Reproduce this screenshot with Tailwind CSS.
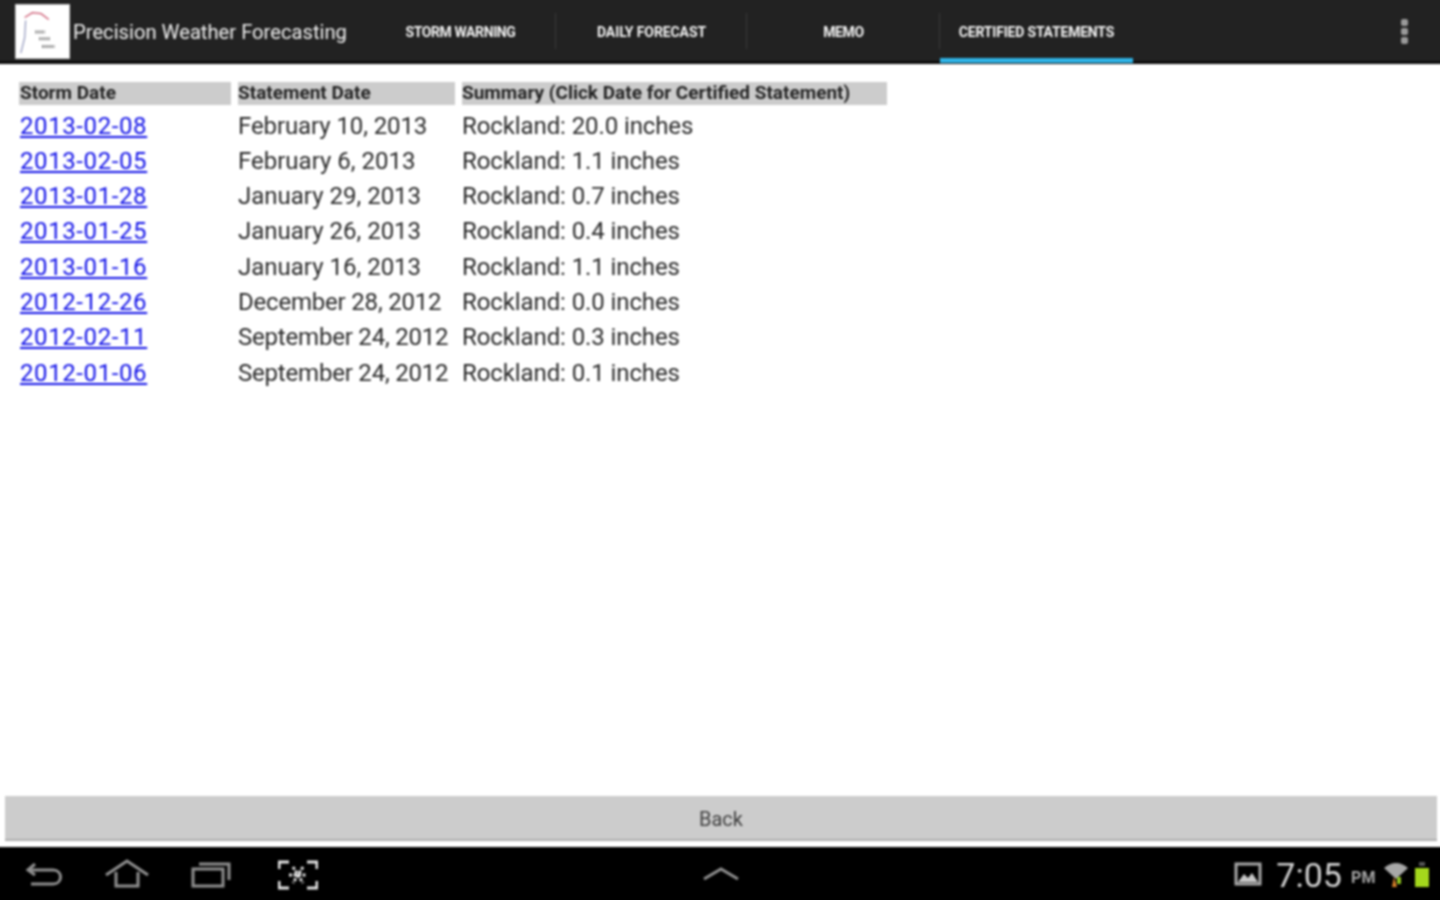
<!DOCTYPE html>
<html lang="en">
<head>
    <meta charset="UTF-8">
    <title>Precision Weather Forecasting</title>
    <script src="https://cdn.jsdelivr.net/npm/@tailwindcss/browser@4"></script>
</head>
<body class="bg-white font-['Roboto',sans-serif] overflow-hidden h-[900px]">
<!-- 4px larger than the window on every side so the blur doesn't fade at the edges -->
<div class="flex flex-col h-[908px] w-[1448px] -mt-[4px] -ml-[4px] blur-[0.8px]">

    <!-- action bar -->
    <header class="flex h-[68px] shrink-0 pt-[4px] px-[4px] bg-[#222222] border-b-[3px] border-[#0c0c0c]">
        <div class="flex items-center w-[365px] pl-[15px] pt-[2px]">
            <div class="w-[55px] h-[55px] bg-white border border-[#ccc] shrink-0">
                <svg viewBox="0 0 55 55" class="w-full h-full">
                    <path d="M9 13 L17 8 L26 9 L34 15" fill="none" stroke="#c9506a" stroke-width="1.2"/>
                    <path d="M10 16 L9 34 L5 50" fill="none" stroke="#8a90b8" stroke-width="1.2"/>
                    <path d="M20 28h10M24 35h11M27 43h13" stroke="#888" stroke-width="3" stroke-dasharray="2 1"/>
                </svg>
            </div>
            <span class="ml-[3px] pt-[2px] text-[20.2px] text-[#f0f0f0] whitespace-nowrap">Precision Weather Forecasting</span>
        </div>
        <nav class="flex h-full text-[14px] font-bold text-[#f4f4f4]">
            <div class="w-[191px] flex items-center justify-center pt-[3px] relative tracking-[-0.4px]">STORM WARNING<span class="absolute right-0 top-[13px] h-[36px] w-px bg-[#3a3a3a]"></span></div>
            <div class="w-[191px] flex items-center justify-center pt-[3px] relative tracking-[-0.1px]">DAILY FORECAST<span class="absolute right-0 top-[13px] h-[36px] w-px bg-[#3a3a3a]"></span></div>
            <div class="w-[193px] flex items-center justify-center pt-[3px] relative tracking-[-0.4px]">MEMO<span class="absolute right-0 top-[13px] h-[36px] w-px bg-[#3a3a3a]"></span></div>
            <div class="w-[193px] flex items-center justify-center pt-[3px] relative tracking-[-0.2px]">CERTIFIED STATEMENTS<span class="absolute left-0 right-0 -bottom-[2px] h-[5px] bg-[#2fb3e6]"></span></div>
        </nav>
        <div class="ml-auto mr-[32px] flex flex-col justify-center gap-[2px] pt-[2px]">
            <span class="w-[7px] h-[7px] rounded-[2px] bg-[#9a9a9a]"></span>
            <span class="w-[7px] h-[7px] rounded-[2px] bg-[#9a9a9a]"></span>
            <span class="w-[7px] h-[7px] rounded-[2px] bg-[#9a9a9a]"></span>
        </div>
    </header>

    <!-- statements table -->
    <main class="flex-1 pt-[18px] pl-[23px]">
        <div class="grid grid-cols-[212px_217px_425px] gap-x-[7px] text-[#2a2a2a] text-[24px] leading-[35.3px]">
            <div class="h-[23px] mb-[3.5px] pl-px bg-[#cccccc] text-[19px] leading-[21px] font-bold text-[#222222] whitespace-nowrap">Storm Date</div>
            <div class="h-[23px] mb-[3.5px] bg-[#cccccc] text-[19px] leading-[21px] font-bold text-[#222222] whitespace-nowrap">Statement Date</div>
            <div class="h-[23px] mb-[3.5px] bg-[#cccccc] text-[19px] leading-[21px] font-bold text-[#222222] whitespace-nowrap">Summary (Click Date for Certified Statement)</div>

            <a href="#" class="pl-px text-[#1010e8] underline tracking-[0.6px]">2013-02-08</a><div class="whitespace-nowrap tracking-[-0.1px]">February 10, 2013</div><div class="tracking-[-0.1px]">Rockland: 20.0 inches</div>
            <a href="#" class="pl-px text-[#1010e8] underline tracking-[0.6px]">2013-02-05</a><div class="whitespace-nowrap">February 6, 2013</div><div class="tracking-[-0.1px]">Rockland: 1.1 inches</div>
            <a href="#" class="pl-px text-[#1010e8] underline tracking-[0.6px]">2013-01-28</a><div class="whitespace-nowrap">January 29, 2013</div><div class="tracking-[-0.1px]">Rockland: 0.7 inches</div>
            <a href="#" class="pl-px text-[#1010e8] underline tracking-[0.6px]">2013-01-25</a><div class="whitespace-nowrap">January 26, 2013</div><div class="tracking-[-0.1px]">Rockland: 0.4 inches</div>
            <a href="#" class="pl-px text-[#1010e8] underline tracking-[0.6px]">2013-01-16</a><div class="whitespace-nowrap">January 16, 2013</div><div class="tracking-[-0.1px]">Rockland: 1.1 inches</div>
            <a href="#" class="pl-px text-[#1010e8] underline tracking-[0.6px]">2012-12-26</a><div class="whitespace-nowrap tracking-[-0.2px]">December 28, 2012</div><div class="tracking-[-0.1px]">Rockland: 0.0 inches</div>
            <a href="#" class="pl-px text-[#1010e8] underline tracking-[0.6px]">2012-02-11</a><div class="whitespace-nowrap tracking-[-0.2px]">September 24, 2012</div><div class="tracking-[-0.1px]">Rockland: 0.3 inches</div>
            <a href="#" class="pl-px text-[#1010e8] underline tracking-[0.6px]">2012-01-06</a><div class="whitespace-nowrap tracking-[-0.2px]">September 24, 2012</div><div class="tracking-[-0.1px]">Rockland: 0.1 inches</div>
        </div>
    </main>

    <!-- back button -->
    <div class="shrink-0 h-[51px] pl-[9px] pr-[7px] pb-[6px]">
        <button class="w-full h-[45px] bg-[#cccccc] border-b-2 border-[#adadad] pt-[2px] text-[20px] text-[#404040]">Back</button>
    </div>

    <!-- system bar -->
    <footer class="shrink-0 h-[57px] pb-[4px] px-[4px] bg-black flex items-center relative">
        <div class="flex items-center pl-[25px] gap-[41px] text-[#8f8f8f]">
            <svg width="38" height="28" viewBox="0 0 38 28" fill="none" stroke="currentColor" stroke-width="3"><path d="M10 4 L3 10 L10 15"/><path d="M3 10 H28 C38 10 38 24 28 24 H6"/></svg>
            <svg width="46" height="30" viewBox="0 0 46 30" fill="none" stroke="currentColor" stroke-width="3"><path d="M2 16 L23 2 L44 16"/><path d="M12 13 V27 H34 V13"/></svg>
            <svg width="40" height="28" viewBox="0 0 40 28" fill="none" stroke="currentColor" stroke-width="3"><rect x="2" y="9" width="30" height="17"/><path d="M8 4 H38 V20"/></svg>
            <svg class="ml-[6px] mt-[3px]" width="40" height="30" viewBox="0 0 40 30" fill="none" stroke="#e4e4e4" stroke-width="3"><path d="M1 9 V2 H11 M29 2 H39 V9 M39 21 V28 H29 M11 28 H1 V21"/><path d="M15 7 L25 23 M25 7 L15 23 M11 15 H29" stroke-width="3" stroke-dasharray="3 1.5"/></svg>
        </div>
        <svg class="absolute left-[707px] top-[20px]" width="36" height="14" viewBox="0 0 36 14" fill="none" stroke="#8f8f8f" stroke-width="3"><path d="M1 12 L18 2 L35 12"/></svg>
        <div class="ml-auto flex items-center pr-[10px] text-[#b5b5b5]">
            <svg width="28" height="26" viewBox="0 0 28 26" fill="none"><rect x="2" y="3" width="24" height="20" stroke="#a8a8a8" stroke-width="3"/><path d="M4 21 L10 13 L14 17 L18 12 L24 21 Z" fill="#c8c8c8"/></svg>
            <span class="ml-[14px] pt-[2px] text-[34px] leading-none text-[#d0d0d0]">7:05</span>
            <span class="ml-[9px] mt-[8px] text-[16px] font-bold text-[#a4a4a4] tracking-[0.4px]">PM</span>
            <svg class="ml-[7px]" width="26" height="28" viewBox="0 0 26 28" fill="none"><path d="M1 8 Q13 -2 25 8 L13 19 Z" fill="#a8a8a8"/><path d="M11 17 L9 27 H14 Z" fill="#d9822b"/><path d="M14 17 H18 V24 H14 Z" fill="#8fc31f"/></svg>
            <svg class="ml-[5px]" width="16" height="26" viewBox="0 0 16 26"><rect x="5" y="1" width="6" height="4" fill="#555"/><rect x="1" y="7" width="14" height="19" fill="#a4d81c"/></svg>
        </div>
    </footer>
</div>
</body>
</html>
